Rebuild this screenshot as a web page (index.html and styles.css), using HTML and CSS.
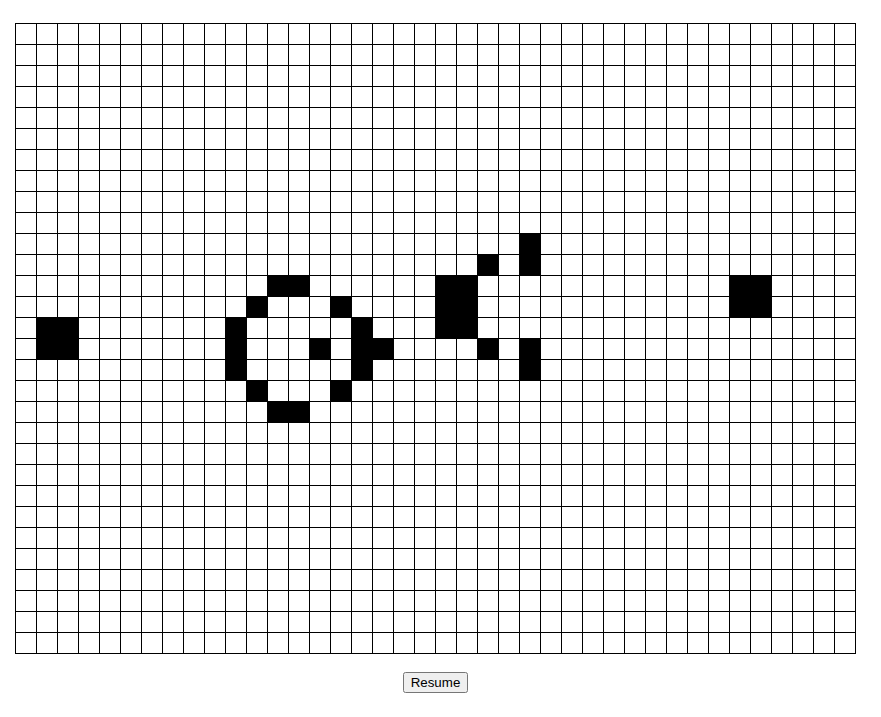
FILE: index.html
```html
<!DOCTYPE html>
<html lang="en">
<head>
	<meta charset="UTF-8">
	<title>Game of Life</title>
	<link rel="stylesheet" href="styles.css">
</head>
<body>

	<div class="game">
		<div id="board" class="board"></div>
		<div class="controls">
			<button id="toggle">Resume</button>
		</div>
	</div>

	<script>
		const ROWS = 30;
		const COLS = 40;

		// lebende Zellen als [zeile, spalte]
		const alive = [
			[14, 1], [14, 2], [15, 1], [15, 2],
			[12, 12], [12, 13],
			[13, 11], [13, 15],
			[14, 10], [14, 16],
			[15, 10], [15, 14], [15, 16], [15, 17],
			[16, 10], [16, 16],
			[17, 11], [17, 15],
			[18, 12], [18, 13],
			[10, 24], [11, 22], [11, 24],
			[12, 20], [12, 21], [13, 20], [13, 21], [14, 20], [14, 21],
			[15, 22], [15, 24], [16, 24],
			[12, 34], [12, 35], [13, 34], [13, 35]
		];

		let board = document.getElementById('board');
		let live = new Set(alive.map(c => c[0] + ',' + c[1]));

		for (let r = 0; r < ROWS; r++) {
			for (let c = 0; c < COLS; c++) {
				let cell = document.createElement('div');
				cell.className = live.has(r + ',' + c) ? 'cell alive' : 'cell';
				board.appendChild(cell);
			}
		}
	</script>

</body>
</html>
```

FILE: styles.css
```css
body {
	margin: 0;
	font-family: Arial, "Liberation Sans", sans-serif;
}
.game {
	width: 841px;
	margin-left: 15px;
	padding-top: 23px;
}
.board {
	display: grid;
	grid-template-columns: repeat(40, 20px);
	grid-auto-rows: 20px;
	gap: 1px;
	padding: 1px;
	background: #000;
}
.cell {
	background: #fff;
}
.cell.alive {
	background: #000;
}
.controls {
	margin-top: 18px;
	text-align: center;
}
button {
	font-family: Arial, "Liberation Sans", sans-serif;
	font-size: 13.333px;
}
```
